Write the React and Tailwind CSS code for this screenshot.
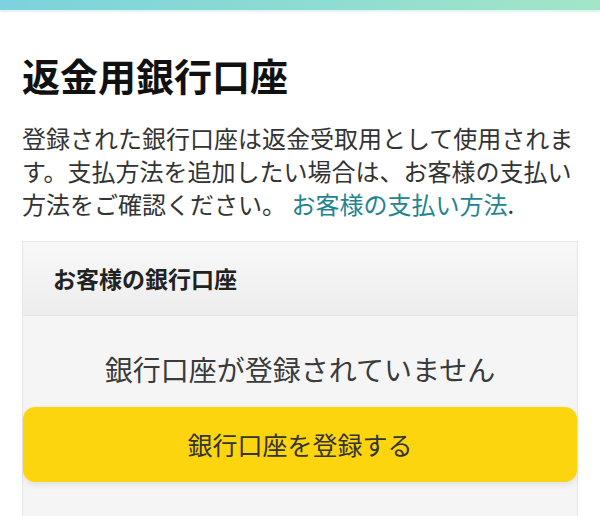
export default function App() {
  return (
    <div
      className="w-[600px] h-[516px] overflow-hidden bg-white"
      style={{ fontFamily: '"Noto Sans CJK JP", "Noto Sans", sans-serif' }}
    >
      <div className="h-[10px] bg-gradient-to-r from-[#7cd2de] via-[#8cdcd2] to-[#a2e6c7] shadow-[0_2px_2px_rgba(160,220,210,0.35)]" />
      <div className="px-[22px]">
        <h1 className="mt-[46px] text-[38px] leading-[38px] font-bold text-[#111]">返金用銀行口座</h1>
        <p className="mt-[27px] text-[24px] leading-[33px] text-[#333]">
          <span>登録された銀行口座は返金受取用として使用されます。支払方法を追加したい場合は、お客様の支払い方法をご確認ください。</span>{' '}
          <a href="#" className="text-[#22848f]">お客様の支払い方法</a>
          <span>.</span>
        </p>
        <div className="mt-[21px] border border-[#e6e6e6]">
          <div className="flex h-[74px] items-center border-b border-[#e2e2e2] bg-gradient-to-b from-[#f8f8f8] to-[#ededed] px-[30px]">
            <h2 className="text-[23px] font-bold text-[#222]">お客様の銀行口座</h2>
          </div>
          <div className="bg-[#f5f5f6] pb-[40px]">
            <p className="pt-[33px] text-center text-[28px] leading-[40px] text-[#3a3a3a]">銀行口座が登録されていません</p>
            <button className="mt-[18px] flex h-[75px] w-full items-center justify-center rounded-[12px] bg-[#fdd50e] text-[25px] text-[#333] shadow-[0_3px_6px_rgba(0,0,0,0.08)]">
              銀行口座を登録する
            </button>
          </div>
        </div>
      </div>
    </div>
  );
}
